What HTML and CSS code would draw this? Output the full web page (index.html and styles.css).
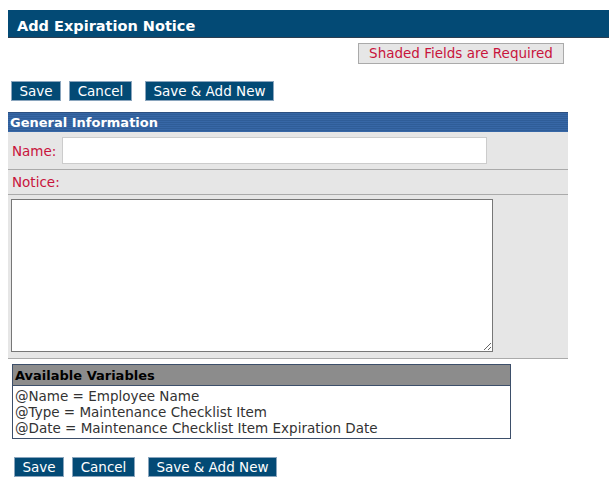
FILE: index.html
```html
<!DOCTYPE html>
<html lang="en">
<head>
    <meta charset="UTF-8">
    <title>Add Expiration Notice</title>
    <link rel="stylesheet" href="styles.css">
</head>
<body>
    <div class="title-bar">Add Expiration Notice</div>

    <div class="required-row">
        <span class="required-note">Shaded Fields are Required</span>
    </div>

    <div class="actions">
        <button type="button" class="btn">Save</button>
        <button type="button" class="btn">Cancel</button>
        <button type="button" class="btn btn-wide">Save &amp; Add New</button>
    </div>

    <div class="section">
        <div class="section-head">General Information</div>
        <div class="row row-name">
            <label class="req" for="name">Name:</label>
            <input type="text" id="name" class="name-input">
        </div>
        <div class="row row-label">
            <label class="req" for="notice">Notice:</label>
        </div>
        <div class="row row-notice">
            <textarea id="notice" class="notice-input"></textarea>
        </div>
    </div>

    <div class="vars">
        <div class="vars-head">Available Variables</div>
        <div class="vars-body">
            <div>@Name = Employee Name</div>
            <div>@Type = Maintenance Checklist Item</div>
            <div>@Date = Maintenance Checklist Item Expiration Date</div>
        </div>
    </div>

    <div class="actions actions-bottom">
        <button type="button" class="btn">Save</button>
        <button type="button" class="btn">Cancel</button>
        <button type="button" class="btn btn-wide">Save &amp; Add New</button>
    </div>
</body>
</html>
```

FILE: styles.css
```css
:root {
    --navy: #034a75;
    --required: #c8143c;
    --shade: #e6e6e6;
    --rule: #aaaaaa;
    --frame: #3d4f6a;
}

* {
    box-sizing: border-box;
}

body {
    margin: 10px 0 0 8px;
    font-family: "DejaVu Sans", Verdana, sans-serif;
    font-size: 13.5px;
    color: #333;
    background: #fff;
}

.title-bar {
    height: 28px;
    padding: 4px 0 0 9px;
    display: flex;
    align-items: center;
    background: var(--navy);
    color: #fff;
    font-weight: bold;
    font-size: 14.5px;
    border-bottom: 1px solid #2c3e50;
}

.required-row {
    width: 560px;
    padding-right: 4px;
    margin-top: 5px;
    display: flex;
    justify-content: flex-end;
}

.required-note {
    display: inline-block;
    width: 206px;
    height: 21px;
    line-height: 19px;
    text-align: center;
    background: var(--shade);
    border: 1px solid var(--rule);
    color: var(--required);
}

.actions {
    margin-top: 17px;
    padding-left: 3px;
    display: flex;
    gap: 8px;
}

.btn {
    height: 20px;
    padding: 0 7.5px;
    border: 1px solid #8aa5bd;
    background: var(--navy);
    color: #fff;
    font-family: inherit;
    font-size: 13.5px;
    line-height: 18px;
}

.btn-wide {
    margin-left: 5px;
}

.section {
    width: 560px;
    margin-top: 11px;
    background: var(--shade);
}

.section-head {
    height: 20px;
    padding-left: 2px;
    line-height: 20px;
    color: #fff;
    font-weight: bold;
    font-size: 13px;
    border-top: 1px solid #2b4f80;
    background: repeating-linear-gradient(180deg, #3767a6 0, #3767a6 1px, #2f5d98 1px, #2f5d98 2px);
}

.row {
    display: flex;
    align-items: center;
    border-bottom: 1px solid var(--rule);
}

.req {
    color: var(--required);
    padding-left: 4px;
}

.row-name {
    padding: 5px 0;
}

.row-name .req {
    width: 54px;
}

.name-input {
    width: 425px;
    height: 27px;
    border: 1px solid #cccccc;
    background: #fff;
}

.row-label {
    height: 25px;
}

.notice-input {
    display: block;
    margin: 4px 0 6px 3px;
    width: 482px;
    height: 153px;
    border: 1px solid #777;
    background: #fff;
}

.vars {
    width: 499px;
    margin: 5px 0 0 4px;
    border: 1px solid var(--frame);
}

.vars-head {
    height: 21px;
    padding-left: 2px;
    line-height: 21px;
    background: #8c8c8c;
    color: #000;
    font-weight: bold;
    font-size: 13px;
    border-bottom: 1px solid var(--frame);
}

.vars-body {
    padding: 2px;
    line-height: 16px;
}

.actions-bottom {
    margin-top: 18px;
    padding-left: 6px;
}
```
